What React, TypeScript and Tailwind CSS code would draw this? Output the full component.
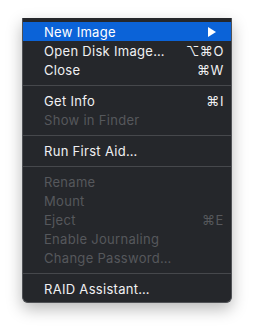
import React from "react";

type Item =
  | { type: "sep" }
  | { type: "item"; label: string; shortcut?: string; disabled?: boolean; active?: boolean; submenu?: boolean };

const items: Item[] = [
  { type: "item", label: "New Image", active: true, submenu: true },
  { type: "item", label: "Open Disk Image…", shortcut: "⌥⌘O" },
  { type: "item", label: "Close", shortcut: "⌘W" },
  { type: "sep" },
  { type: "item", label: "Get Info", shortcut: "⌘I" },
  { type: "item", label: "Show in Finder", disabled: true },
  { type: "sep" },
  { type: "item", label: "Run First Aid…" },
  { type: "sep" },
  { type: "item", label: "Rename", disabled: true },
  { type: "item", label: "Mount", disabled: true },
  { type: "item", label: "Eject", shortcut: "⌘E", disabled: true },
  { type: "item", label: "Enable Journaling", disabled: true },
  { type: "item", label: "Change Password…", disabled: true },
  { type: "sep" },
  { type: "item", label: "RAID Assistant…" },
];

export default function App() {
  return (
    <div className="w-[255px] h-[330px] bg-white pt-[18px] pl-[22px]" style={{ fontFamily: "Inter, 'Liberation Sans', sans-serif" }}>
      <div className="w-[210px] h-[285px] bg-[#25272b] border border-t-0 border-[#505256] rounded-b-[6px] shadow-[0_6px_16px_rgba(0,0,0,0.28)] pt-[4px] pb-[4px] text-[13px]">
        {items.map((it, i) =>
          it.type === "sep" ? (
            <div key={i} className="h-[12px] flex items-center">
              <div className="h-px w-full bg-[#46484c]" />
            </div>
          ) : (
            <div
              key={i}
              className={
                "h-[19px] flex items-center pl-[21px] pr-[7px] leading-none pt-px " +
                (it.active ? "bg-[#0b63d8] text-white" : it.disabled ? "text-[#56585c]" : "text-[#f0f0f2]")
              }
            >
              <span className="flex-1 tracking-[0.3px]">{it.label}</span>
              {it.shortcut && <span className="tracking-[0.6px]">{it.shortcut}</span>}
              {it.submenu && (
                <svg width="8" height="10" viewBox="0 0 8 10" className="mr-[8px]">
                  <path d="M0 0 L8 5 L0 10 Z" fill="white" />
                </svg>
              )}
            </div>
          )
        )}
      </div>
    </div>
  );
}
